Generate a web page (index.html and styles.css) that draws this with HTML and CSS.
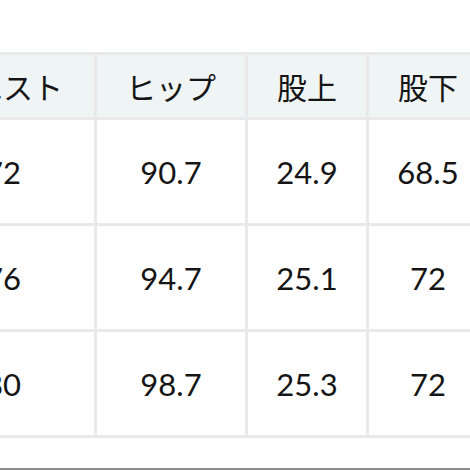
FILE: index.html
```html
<!DOCTYPE html>
<html lang="ja">
<head>
<meta charset="utf-8">
<link rel="stylesheet" href="styles.css">
</head>
<body>
<div class="page">
  <table class="size-table">
    <colgroup>
      <col class="c0"><col class="c1"><col class="c2"><col class="c3">
    </colgroup>
    <thead>
      <tr>
        <th>ウエスト</th>
        <th>ヒップ</th>
        <th>股上</th>
        <th>股下</th>
      </tr>
    </thead>
    <tbody>
      <tr><td>72</td><td>90.7</td><td>24.9</td><td>68.5</td></tr>
      <tr><td>76</td><td>94.7</td><td>25.1</td><td>72</td></tr>
      <tr><td>80</td><td>98.7</td><td>25.3</td><td>72</td></tr>
    </tbody>
  </table>
  <div class="rule"></div>
</div>
</body>
</html>
```
FILE: styles.css
```css
html, body {
  margin: 0;
  padding: 0;
  background: #ffffff;
  overflow: hidden;
}

.page {
  width: 470px;
  height: 470px;
  overflow: hidden;
  display: flex;
  flex-direction: column;
  padding-top: 52px;
  box-sizing: border-box;
}

.size-table {
  margin-left: -91px;
  border-collapse: separate;
  border-spacing: 3px;
  background: #e9e9e9;
  table-layout: fixed;
  width: 581px;
  flex: none;
}

.c0 { width: 182px; }
.c1 { width: 148px; }
.c2 { width: 118px; }
.c3 { width: 118px; }

.size-table th,
.size-table td {
  padding: 0;
  text-align: center;
  vertical-align: middle;
  color: #151515;
}

.size-table th {
  height: 62px;
  background: #eff4f5;
  font-family: "Noto Sans CJK JP", "Noto Sans", sans-serif;
  font-size: 30px;
  font-weight: 400;
}

.size-table td {
  height: 103px;
  background: #ffffff;
  font-family: Lato, "Noto Sans", sans-serif;
  font-size: 31px;
  font-weight: 400;
}

.rule {
  margin-top: auto;
  height: 2px;
  background: #8c8c8c;
  flex: none;
}
```
